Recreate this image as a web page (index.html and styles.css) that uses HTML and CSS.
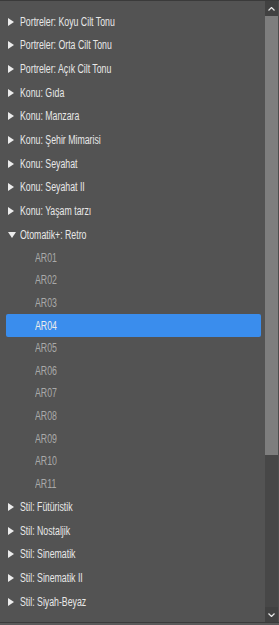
FILE: index.html
```html
<!DOCTYPE html>
<html>
<head>
    <title>Presets</title>
    <link rel="stylesheet" href="styles.css">
</head>
<body>
    <div class="panel">
        <div class="tree">
            <div class="group"><span class="arrow"></span><span class="label">Portreler: Koyu Cilt Tonu</span></div>
            <div class="group"><span class="arrow"></span><span class="label">Portreler: Orta Cilt Tonu</span></div>
            <div class="group"><span class="arrow"></span><span class="label">Portreler: Açık Cilt Tonu</span></div>
            <div class="group"><span class="arrow"></span><span class="label">Konu: Gıda</span></div>
            <div class="group"><span class="arrow"></span><span class="label">Konu: Manzara</span></div>
            <div class="group"><span class="arrow"></span><span class="label">Konu: Şehir Mimarisi</span></div>
            <div class="group"><span class="arrow"></span><span class="label">Konu: Seyahat</span></div>
            <div class="group"><span class="arrow"></span><span class="label">Konu: Seyahat II</span></div>
            <div class="group"><span class="arrow"></span><span class="label">Konu: Yaşam tarzı</span></div>
            <div class="group open"><span class="arrow"></span><span class="label">Otomatik+: Retro</span></div>
            <div class="item"><span class="label">AR01</span></div>
            <div class="item"><span class="label">AR02</span></div>
            <div class="item"><span class="label">AR03</span></div>
            <div class="item selected"><span class="label">AR04</span></div>
            <div class="item"><span class="label">AR05</span></div>
            <div class="item"><span class="label">AR06</span></div>
            <div class="item"><span class="label">AR07</span></div>
            <div class="item"><span class="label">AR08</span></div>
            <div class="item"><span class="label">AR09</span></div>
            <div class="item"><span class="label">AR10</span></div>
            <div class="item"><span class="label">AR11</span></div>
            <div class="group"><span class="arrow"></span><span class="label">Stil: Fütüristik</span></div>
            <div class="group"><span class="arrow"></span><span class="label">Stil: Nostaljik</span></div>
            <div class="group"><span class="arrow"></span><span class="label">Stil: Sinematik</span></div>
            <div class="group"><span class="arrow"></span><span class="label">Stil: Sinematik II</span></div>
            <div class="group"><span class="arrow"></span><span class="label">Stil: Siyah-Beyaz</span></div>
        </div>
        <div class="scrollbar">
            <div class="scroll-btn">
                <svg width="7" height="4" viewBox="0 0 7 4"><path d="M0.5 3.5 L3.5 0.5 L6.5 3.5" fill="none" stroke="#e8e8e8" stroke-width="1.2"/></svg>
            </div>
            <div class="track">
                <div class="thumb"></div>
            </div>
            <div class="scroll-btn">
                <svg width="7" height="4" viewBox="0 0 7 4"><path d="M0.5 0.5 L3.5 3.5 L6.5 0.5" fill="none" stroke="#e8e8e8" stroke-width="1.2"/></svg>
            </div>
        </div>
    </div>
</body>
</html>
```

FILE: styles.css
```css
body {
    margin: 0;
    background-color: #5a5a5a;
    font-family: "Liberation Sans", Arial, sans-serif;
    font-size: 12px;
}
.panel {
    width: 279px;
    height: 623px;
    box-sizing: border-box;
    display: flex;
    background-color: #535353;
    border-top: 1px solid #3a3a3a;
    border-bottom: 1px solid #3a3a3a;
}
.tree {
    flex: 1;
    padding-top: 9px;
    overflow: hidden;
}
.label {
    display: inline-block;
    white-space: nowrap;
    transform: scaleX(0.73);
    transform-origin: left center;
}
.group {
    height: 23.67px;
    display: flex;
    align-items: center;
    padding-left: 8px;
    color: #e8e8e8;
}
.arrow {
    flex: none;
    width: 0;
    height: 0;
    border-left: 6px solid #ececec;
    border-top: 4px solid transparent;
    border-bottom: 4px solid transparent;
    margin-right: 6px;
}
.group.open .arrow {
    border-top: 6px solid #ececec;
    border-left: 4px solid transparent;
    border-right: 4px solid transparent;
    border-bottom: 0;
    margin-right: 4px;
}
.item {
    height: 22.6px;
    display: flex;
    align-items: center;
    padding-left: 35px;
    color: #a9a9a9;
}
.item.selected {
    margin: 0 4px 0 6px;
    padding-left: 29px;
    background-color: #3a8ded;
    border-radius: 2px;
    color: #ececec;
}
.scrollbar {
    width: 13px;
    display: flex;
    flex-direction: column;
    background-color: #474747;
    border-right: 1px solid #4d4d4d;
}
.scroll-btn {
    height: 15px;
    display: flex;
    align-items: center;
    justify-content: center;
    background-color: #414141;
}
.track {
    flex: 1;
}
.thumb {
    height: 439px;
    background-color: #7e7e7e;
}
```
